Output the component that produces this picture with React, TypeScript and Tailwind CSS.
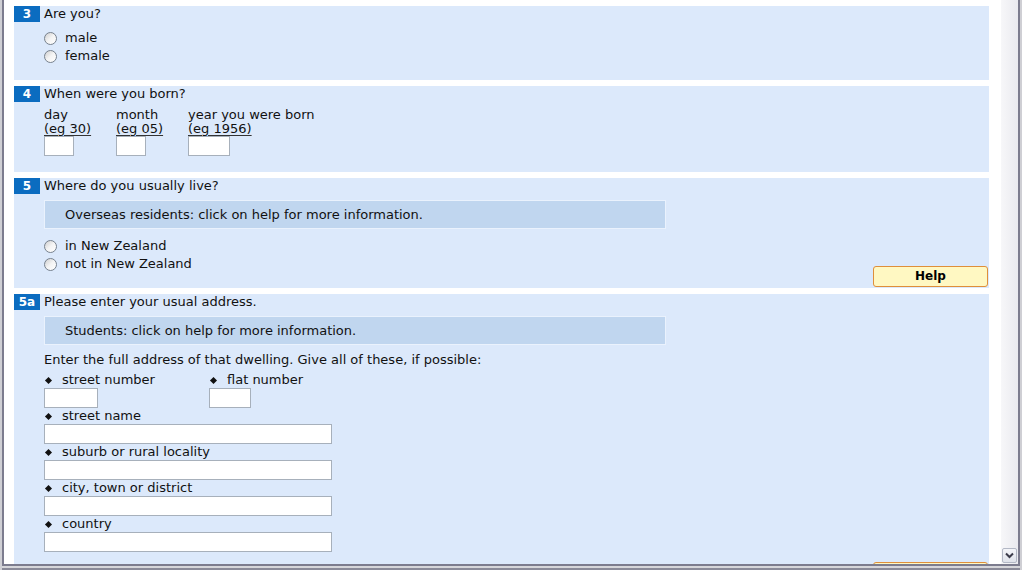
import type { ReactNode } from "react";

// Census-style form, panels 3 – 5a, scrolled part-way down the page

function Badge({ n }: { n: string }) {
	return (
		<div className="w-[26px] h-[16px] bg-[#0b6cc0] text-white font-bold text-[12px] text-center leading-[16px]">
			{n}
		</div>
	);
}

function Question({ n, text }: { n: string; text: string }) {
	return (
		<div className="flex items-center h-[16px]">
			<Badge n={n} />
			<span className="ml-[4px]">{text}</span>
		</div>
	);
}

function Radio({ label }: { label: string }) {
	return (
		<label className="flex items-center h-[18px]">
			<span className="w-[13px] h-[13px] rounded-full border border-[#77818d] bg-gradient-to-br from-[#cfcfcf] via-[#f4f4f4] to-white" />
			<span className="ml-[8px]">{label}</span>
		</label>
	);
}

function InfoBox({ children }: { children: ReactNode }) {
	return (
		<div className="w-[622px] h-[29px] flex items-center pl-[20px] bg-[#c0d6ef] border border-[#eaf2fd]">
			{children}
		</div>
	);
}

function HelpButton() {
	return (
		<button className="w-[115px] h-[21px] shrink-0 rounded-[3px] border border-[#df8f3a] bg-[#fff8c2] font-bold text-[12px] leading-[19px] text-black text-center">
			Help
		</button>
	);
}

function Bullet() {
	return (
		<span className="w-[18px] flex items-center">
			<span className="ml-[2px] w-[5px] h-[5px] rotate-45 bg-[#111]" />
		</span>
	);
}

function Field({ label, width }: { label: string; width: string }) {
	return (
		<div>
			<div className="flex items-center h-[16px]">
				<Bullet />
				<span>{label}</span>
			</div>
			<input className={`block h-[20px] border border-[#a7b0bb] bg-white ${width}`} />
		</div>
	);
}

const BIRTH = [
	{ top: "day", eg: "(eg 30)", w: "w-[30px]" },
	{ top: "month", eg: "(eg 05)", w: "w-[30px]" },
	{ top: "year you were born", eg: "(eg 1956)", w: "w-[42px]" },
];

export default function App() {
	return (
		<div className="w-[1022px] h-[570px] overflow-hidden flex flex-col bg-[#cfcfd4] px-[2px] font-['DejaVu_Sans',Verdana,sans-serif] text-[13px] leading-[16px] text-[#111]">
			<div className="h-[566px] flex border-l-2 border-r-2 border-b-2 border-[#7c7c8e]">
				{/* page body */}
				<div className="flex-1 bg-white pl-[10px] pr-[12px] pt-[6px] flex flex-col gap-[6px] overflow-hidden">
					{/* 3 */}
					<section className="bg-[#dce9fb] pb-[15px]">
						<Question n="3" text="Are you?" />
						<div className="mt-[7px] pl-[30px]">
							<Radio label="male" />
							<Radio label="female" />
						</div>
					</section>

					{/* 4 */}
					<section className="bg-[#dce9fb] pb-[16px]">
						<Question n="4" text="When were you born?" />
						<div className="mt-[6px] pl-[30px] flex">
							{BIRTH.map((b) => (
								<div key={b.top} className="w-[72px] leading-[14px]">
									<div className="h-[14px] whitespace-nowrap">{b.top}</div>
									<div className="h-[14px] whitespace-nowrap underline underline-offset-[2px] decoration-[#333]">
										{b.eg}
									</div>
									<input className={`block h-[20px] border border-[#a7b0bb] bg-white ${b.w}`} />
								</div>
							))}
						</div>
					</section>

					{/* 5 */}
					<section className="bg-[#dce9fb]">
						<Question n="5" text="Where do you usually live?" />
						<div className="mt-[6px] pl-[30px]">
							<InfoBox>Overseas residents: click on help for more information.</InfoBox>
						</div>
						<div className="mt-[8px] pl-[30px] pr-[1px] pb-[1px] flex justify-between items-end">
							<div className="pb-[14px]">
								<Radio label="in New Zealand" />
								<Radio label="not in New Zealand" />
							</div>
							<HelpButton />
						</div>
					</section>

					{/* 5a */}
					<section className="bg-[#dce9fb] shrink-0">
						<Question n="5a" text="Please enter your usual address." />
						<div className="mt-[6px] pl-[30px]">
							<InfoBox>Students: click on help for more information.</InfoBox>
							<div className="mt-[7px] h-[16px]">
								Enter the full address of that dwelling. Give all of these, if possible:
							</div>
							<div className="mt-[4px] flex">
								<div className="w-[165px]">
									<Field label="street number" width="w-[54px]" />
								</div>
								<Field label="flat number" width="w-[42px]" />
							</div>
							<Field label="street name" width="w-[288px]" />
							<Field label="suburb or rural locality" width="w-[288px]" />
							<Field label="city, town or district" width="w-[288px]" />
							<Field label="country" width="w-[288px]" />
						</div>
						<div className="mt-[10px] pr-[1px] flex justify-end">
							<HelpButton />
						</div>
					</section>
				</div>

				{/* scrollbar */}
				<div className="w-[17px] flex flex-col bg-gradient-to-r from-[#f7f7f9] to-[#eaeaef]">
					<div className="flex-1" />
					<div className="mb-[1px] ml-[1px] w-[15px] h-[15px] rounded-[2px] border border-[#b3b8c5] bg-gradient-to-b from-[#f4f5f9] to-[#dfe2ea] flex items-center justify-center">
						<svg width="9" height="7" viewBox="0 0 9 7">
							<path d="M1 1.5 L4.5 5 L8 1.5" fill="none" stroke="#3b3b4a" strokeWidth="2" />
						</svg>
					</div>
				</div>
			</div>
			<div className="h-[2px] bg-[#d6d6da]" />
			<div className="h-[2px] bg-[#8a8a98]" />
		</div>
	);
}
